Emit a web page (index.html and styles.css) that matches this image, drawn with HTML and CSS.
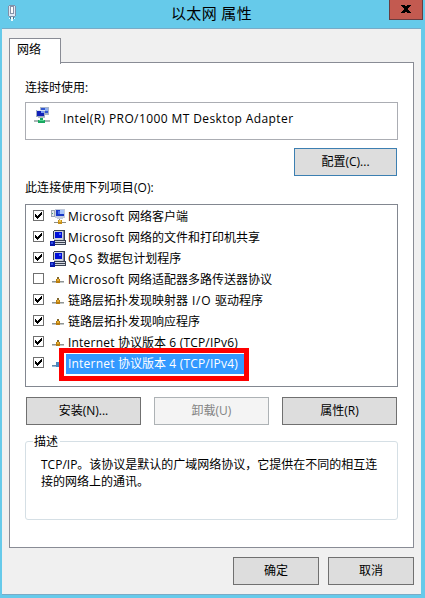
FILE: index.html
```
<!DOCTYPE html>
<html lang="zh-CN">
<head>
<meta charset="utf-8">
<title>以太网 属性</title>
<link rel="stylesheet" href="styles.css">
</head>
<body>
<svg class="defs" aria-hidden="true">
  <symbol id="client" viewBox="0 0 16 16">
    <path fill="#9aa4b4" d="M1 1h4v7H1z"/><path fill="#e4e8ee" d="M2 2h2v5H2z"/><path fill="#48a070" d="M2 4h1v1H2z"/>
    <path fill="#c4ccdc" d="M5 0h10v9H5z"/><path fill="#1838c8" d="M6 1h8v6H6z"/><path fill="#a8c4fa" d="M10 1h4v4h-4z"/><path fill="#4870e8" d="M8 2h2v3H8z"/>
    <path fill="#c4ccd8" d="M7 9h6v1H7z"/><path fill="#8c8c84" d="M9 10h1v3H9zM4 13h12v1H4z"/><path fill="#c89018" d="M8 11h4v4H8z"/><path fill="#f0c850" d="M9 11h2v2H9z"/>
  </symbol>
  <symbol id="service" viewBox="0 0 16 16">
    <path fill="#384050" d="M4 0h10l1 1v9l1 1v3l-1 1H3v-4l1-1-1-1V1z"/>
    <path fill="#ccd0d8" d="M4 1h9v9H4z"/><path fill="#8088a0" d="M13 1h1v9h-1z"/><path fill="#0010d8" d="M5 2h7v6H5z"/><path fill="#4868ff" d="M9 3h2v2H9z"/>
    <path fill="#d4d8e0" d="M5 11h10v1H5zM5 13h10v1H5z"/><path fill="#0818a8" d="M0 11h4l1 1v4H0z"/><path fill="#3050e8" d="M1 12h2v2H1z"/>
  </symbol>
  <symbol id="protocol" viewBox="0 0 16 16">
    <path fill="#8e9494" d="M2 9h12v1H2z"/><path fill="#c4c8c8" d="M2 10h12v1H2z"/><path fill="#806830" d="M7 5h2v2H7z"/><path fill="#b87c10" d="M6 7h4v4H6z"/><path fill="#e8b030" d="M7 7h2v2H7z"/>
  </symbol>
  <symbol id="protocol-on" viewBox="0 0 16 16">
    <path fill="#6688a8" d="M2 9h12v1H2z"/><path fill="#90bce0" d="M2 10h12v1H2z"/><path fill="#4c88c0" d="M6 6h4v5H6z"/>
  </symbol>
</svg>
<main class="window">
  <header class="titlebar">
    <svg class="app-icon" width="8" height="16" viewBox="0 0 8 16" shape-rendering="crispEdges"><path fill="#8190a8" d="M1 0h6v1h1v10H7v1H1v-1H0V1h1z"/><path fill="#dfe9f5" d="M1 1h6v10H1z"/><path fill="#8793a9" d="M2 1h4v8H2z"/><path fill="#fff" d="M3 2h2v6H3z"/><path fill="#48708c" d="M2 12h1v2H2zM5 12h1v2H5z"/><path fill="#e8fcff" d="M3 12h2v4H3zM1 13h1v1H1zM6 13h1v1H6z"/></svg>
    <h1 class="title">以太网 属性</h1>
    <button class="close" aria-label="关闭"><svg width="10" height="8" viewBox="0 0 10 8" shape-rendering="crispEdges"><path d="M0 0h4v1h2V0h4v1H9v1H8v1H7v2h1v1h1v1h1v1H6V7H4v1H0V7h1V6h1V5h1V3H2V2H1V1H0z"/></svg></button>
  </header>
  <div class="client">
    <div class="tab">网络</div>
    <section class="pane">
      <div class="label">连接时使用:</div>
      <div class="adapter">
        <svg width="16" height="16" viewBox="0 0 16 16" shape-rendering="crispEdges"><path fill="#a8b4c8" d="M6 0h9v8H6z"/><path fill="#3458d0" d="M7 1h7v5H7z"/><path fill="#90b0f0" d="M11 1h3v3h-3z"/><path fill="#a0acc0" d="M2 3h9v7H2z"/><path fill="#dce6f4" d="M3 3h8v1H3z"/><path fill="#1020b8" d="M3 4h7v5H3z"/><path fill="#7ca0f4" d="M7 4h3v2H7z"/><path fill="#b4bcc8" d="M4 10h7v1H4z"/><path fill="#a8b4b4" d="M0 13h16v2H0z"/><path fill="#18a860" d="M6 11h3v2h2v3H4v-3h2z"/><path fill="#50d890" d="M5 13h5v1H5z"/></svg>
        <span class="adapter-name">Intel(R) PRO/1000 MT Desktop Adapter</span>
      </div>
      <button class="btn configure">配置(C)...</button>
      <div class="label items-label">此连接使用下列项目(O):</div>
      <ul class="list">
        <li><i class="check on"></i><svg class="ico"><use href="#client"/></svg><span><em>Microsoft </em>网络客户端</span></li>
        <li><i class="check on"></i><svg class="ico"><use href="#service"/></svg><span><em>Microsoft </em>网络的文件和打印机共享</span></li>
        <li><i class="check on"></i><svg class="ico"><use href="#service"/></svg><span><em class="wide">QoS </em>数据包计划程序</span></li>
        <li><i class="check"></i><svg class="ico"><use href="#protocol"/></svg><span><em>Microsoft </em>网络适配器多路传送器协议</span></li>
        <li><i class="check on"></i><svg class="ico"><use href="#protocol"/></svg><span>链路层拓扑发现映射器<em class="wide"> I/O </em>驱动程序</span></li>
        <li><i class="check on"></i><svg class="ico"><use href="#protocol"/></svg><span>链路层拓扑发现响应程序</span></li>
        <li><i class="check on"></i><svg class="ico"><use href="#protocol"/></svg><span><em class="snug">Internet </em>协议版本<em class="snug"> 6 (TCP/IPv6)</em></span></li>
        <li class="selected"><i class="check on"></i><svg class="ico"><use href="#protocol-on"/></svg><span><em class="snug">Internet </em>协议版本<em class="snug"> 4 (TCP/IPv4)</em></span><b class="marker"></b></li>
      </ul>
      <div class="actions">
        <button class="btn">安装(N)...</button>
        <button class="btn" disabled>卸载(U)</button>
        <button class="btn">属性(R)</button>
      </div>
      <fieldset class="group">
        <legend>描述</legend>
        <p>TCP/IP。该协议是默认的广域网络协议，它提供在不同的相互连接的网络上的通讯。</p>
      </fieldset>
    </section>
    <footer class="footer">
      <button class="btn">确定</button>
      <button class="btn">取消</button>
    </footer>
  </div>
</main>
</body>
</html>
```
FILE: styles.css
```
* { box-sizing: border-box; }
body {
  margin: 0;
  font: 12px/17px "Open Sans", "Noto Sans CJK SC", sans-serif;
  color: #000;
}
.defs { display: none; }
.window {
  width: 425px;
  height: 598px;
  padding: 0 4px 3px 2px;
  background: #66caea;
}
.titlebar {
  position: relative;
  display: flex;
  height: 28px;
}
.app-icon { margin: 5px 0 0 6px; }
.title {
  flex: 1;
  margin: 3px 0 0 -14px;
  font-size: 15px;
  line-height: 20px;
  font-weight: 400;
  letter-spacing: .35px;
  text-align: center;
}
.close {
  position: absolute;
  right: -2px;
  top: 0;
  width: 34px;
  height: 20px;
  padding: 0 0 2px;
  display: flex;
  align-items: center;
  justify-content: center;
  background: #c35a50;
  border: 1px solid #673d40;
  border-top: 0;
}
.client {
  height: 567px;
  padding: 9px 7px 0;
  background: #f0f0f0;
  border-top: 1px solid #79abc7;
  border-bottom: 1px solid #79abc7;
}
.tab {
  position: relative;
  z-index: 1;
  width: 52px;
  height: 26px;
  margin-bottom: -2px;
  padding: 2px 0 0 7px;
  background: #fff;
  border: 1px solid #898c95;
  border-bottom: 0;
}
.pane {
  width: 405px;
  height: 486px;
  padding: 16px 15px 0;
  background: #fff;
  border: 1px solid #898c95;
}
.label { height: 17px; white-space: nowrap; }
.adapter {
  display: flex;
  height: 38px;
  margin-top: 6px;
  padding: 4px 8px;
  border: 1px solid #abadb3;
}
.adapter-name { margin: 3px 0 0 13px; letter-spacing: .4px; }
.btn {
  height: 28px;
  padding: 0 0 1px;
  font: inherit;
  color: #000;
  background: #ddd;
  border: 1px solid #707070;
  border-radius: 0;
}
.btn:disabled { color: #838383; background: #f4f4f4; border-color: #adb2b5; }
.configure {
  display: block;
  width: 103px;
  margin: 8px 1px 0 auto;
  border-color: #3c7fb1;
}
.items-label { margin-top: 3px; letter-spacing: .1px; }
.list {
  height: 183px;
  margin: 8px 0 0;
  padding: 0 7px;
  list-style: none;
  border: 1px solid #828790;
}
.list li {
  position: relative;
  display: flex;
  align-items: center;
  height: 21px;
  white-space: nowrap;
}
.check {
  width: 11px;
  height: 11px;
  border: 1px solid #707070;
}
.check.on {
  background: conic-gradient(#000 0 0) 1px 3px / 1px 3px no-repeat,
    conic-gradient(#000 0 0) 2px 4px / 1px 3px no-repeat,
    conic-gradient(#000 0 0) 3px 5px / 1px 3px no-repeat,
    conic-gradient(#000 0 0) 4px 4px / 1px 3px no-repeat,
    conic-gradient(#000 0 0) 5px 3px / 1px 3px no-repeat,
    conic-gradient(#000 0 0) 6px 2px / 1px 3px no-repeat,
    conic-gradient(#000 0 0) 7px 1px / 1px 3px no-repeat;
}
.ico {
  width: 16px;
  height: 16px;
  margin: 2px 0 0 6px;
  shape-rendering: crispEdges;
}
.list span {
  height: 20px;
  padding: 0 5px 0 2px;
  line-height: 20px;
  margin-top: 2px;
}
.list em { font-style: normal; letter-spacing: .4px; }
.list em.wide { letter-spacing: .75px; }
.list em.snug { letter-spacing: .2px; }
.selected span {
  width: 178px;
  color: #fff;
  background: #3399ff;
}
.marker {
  position: absolute;
  left: 26px;
  top: -4px;
  width: 190px;
  height: 33px;
  border: 5px solid #fe0000;
}
.actions {
  display: flex;
  gap: 13px;
  margin: 10px 1px 0;
}
.actions .btn { flex: 1; }
.group {
  height: 87px;
  margin: 8px 0 0;
  padding: 6px 15px 0;
  border: 1px solid #d5dfe5;
  border-radius: 3px;
}
.group legend { margin-left: -8px; padding: 0 2px 0 1px; }
.group p { margin: 0; }
.footer {
  display: flex;
  justify-content: flex-end;
  gap: 9px;
  padding-top: 9px;
}
.footer .btn { width: 86px; }
```
